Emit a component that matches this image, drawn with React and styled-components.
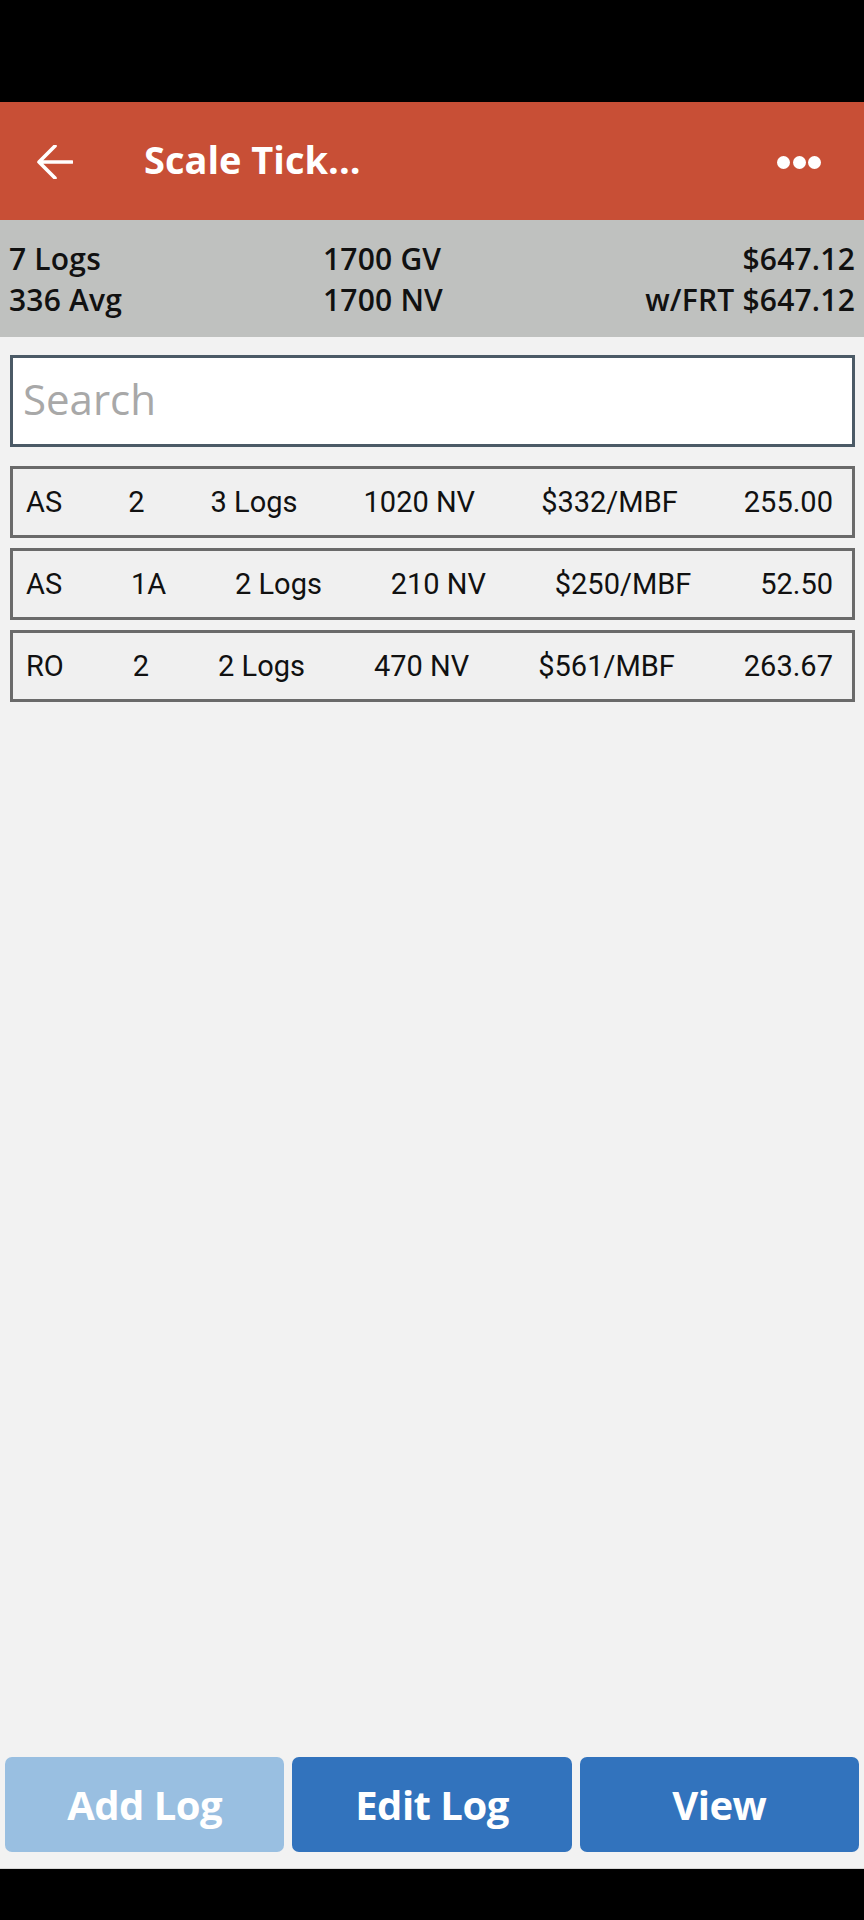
import React from 'react'
import styled, { createGlobalStyle } from 'styled-components'

const GlobalStyle = createGlobalStyle`
  html, body {
    margin: 0;
    padding: 0;
    background: #f2f2f2;
  }
  * {
    box-sizing: border-box;
  }
`

const summary = {
  logs: '7 Logs',
  avg: '336 Avg',
  gv: '1700 GV',
  nv: '1700 NV',
  total: '$647.12',
  freight: 'w/FRT $647.12',
}

const rows = [
  ['AS', '2', '3 Logs', '1020 NV', '$332/MBF', '255.00'],
  ['AS', '1A', '2 Logs', '210 NV', '$250/MBF', '52.50'],
  ['RO', '2', '2 Logs', '470 NV', '$561/MBF', '263.67'],
]

const BackArrow = () => (
  <svg width="36" height="34" viewBox="0 0 36 34" fill="none">
    <path
      d="M35 17H2M18 1L2 17l16 16"
      stroke="#fff"
      strokeWidth="3.6"
      strokeLinecap="round"
      strokeLinejoin="round"
    />
  </svg>
)

const App = () => (
  <Screen>
    <GlobalStyle />
    <StatusBar />
    <Header>
      <BackButton>
        <BackArrow />
      </BackButton>
      <Title>Scale Tick...</Title>
      <MoreButton>
        <Dot />
        <Dot />
        <Dot />
      </MoreButton>
    </Header>
    <Summary>
      <SummaryCell>{summary.logs}</SummaryCell>
      <SummaryCell>{summary.gv}</SummaryCell>
      <SummaryCell $right>{summary.total}</SummaryCell>
      <SummaryCell>{summary.avg}</SummaryCell>
      <SummaryCell>{summary.nv}</SummaryCell>
      <SummaryCell $right>{summary.freight}</SummaryCell>
    </Summary>
    <Content>
      <SearchInput placeholder="Search" />
      <List>
        {rows.map((r, i) => (
          <Row key={i}>
            {r.map((c, j) => (
              <Cell key={j}>{c}</Cell>
            ))}
          </Row>
        ))}
      </List>
    </Content>
    <Footer>
      <ActionButton $disabled>Add Log</ActionButton>
      <ActionButton>Edit Log</ActionButton>
      <ActionButton>View</ActionButton>
    </Footer>
    <NavBar />
  </Screen>
)

export default App

const Screen = styled.div`
  width: 864px;
  height: 1920px;
  display: flex;
  flex-direction: column;
  background: #f2f2f2;
  font-family: 'Open Sans', 'Liberation Sans', sans-serif;
`

const StatusBar = styled.div`
  height: 102px;
  background: #000;
  flex-shrink: 0;
`

const Header = styled.header`
  height: 118px;
  flex-shrink: 0;
  background: #c84f36;
  display: flex;
  align-items: center;
  padding: 0 43px 0 37px;
`

const BackButton = styled.div`
  display: flex;
  align-items: center;
  margin-top: 2px;
`

const Title = styled.h1`
  margin: 0 0 4px 71px;
  flex: 1;
  color: #fff;
  font-family: 'Open Sans', sans-serif;
  font-weight: 700;
  font-size: 38px;
  letter-spacing: 0;
  line-height: 1;
`

const MoreButton = styled.div`
  display: flex;
  gap: 2.5px;
  margin-top: 2px;
`

const Dot = styled.span`
  width: 13px;
  height: 13px;
  border-radius: 50%;
  background: #fff;
`

const Summary = styled.section`
  height: 117px;
  flex-shrink: 0;
  background: #bfc1bf;
  display: grid;
  grid-template-columns: 314px 1fr auto;
  align-content: center;
  padding: 0 9px 0 9px;
`

const SummaryCell = styled.div`
  font-family: 'Open Sans', sans-serif;
  font-size: 30px;
  font-weight: 600;
  line-height: 41px;
  letter-spacing: 0.2px;
  color: #111;
  text-align: ${p => (p.$right ? 'right' : 'left')};
`

const Content = styled.main`
  flex: 1;
  padding: 18px 9px 0 10px;
  display: flex;
  flex-direction: column;
`

const SearchInput = styled.input`
  height: 92px;
  width: 100%;
  border: 3px solid #4b5a66;
  background: #fff;
  padding: 0 10px 6px;
  font-family: 'Open Sans', sans-serif;
  font-size: 42px;
  color: #222;
  outline: none;

  &::placeholder {
    color: #a8a8a8;
  }
`

const List = styled.div`
  margin-top: 19px;
  display: flex;
  flex-direction: column;
  gap: 10px;
`

const Row = styled.div`
  height: 72px;
  border: 3px solid #6a6a6a;
  background: #f0f0f0;
  display: flex;
  align-items: center;
  justify-content: space-between;
  padding: 0 19px 0 13px;
`

const Cell = styled.span`
  font-family: Roboto, sans-serif;
  font-size: 29px;
  color: #111;
  white-space: nowrap;
`

const Footer = styled.footer`
  flex-shrink: 0;
  display: grid;
  grid-template-columns: repeat(3, 1fr);
  gap: 8px;
  padding: 0 5px 16px;
`

const ActionButton = styled.button`
  height: 95px;
  border: none;
  border-radius: 7px;
  background: ${p => (p.$disabled ? '#99bfe1' : '#3273bd')};
  color: #fff;
  font-family: 'Open Sans', sans-serif;
  font-weight: 700;
  font-size: 40px;
  letter-spacing: -0.5px;
  padding: 0;
`

const NavBar = styled.div`
  height: 52px;
  flex-shrink: 0;
  background: #000;
  border-top: 1px solid #d6d6d6;
`
